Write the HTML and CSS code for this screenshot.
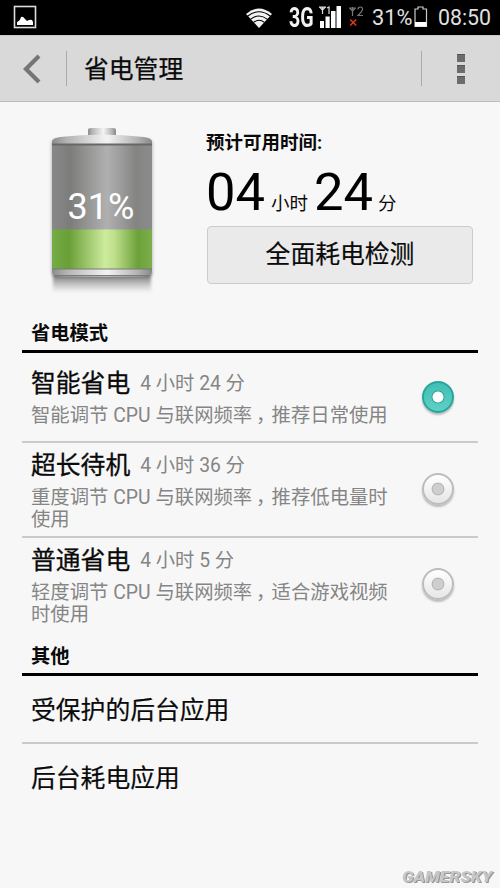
FILE: index.html
```html
<!DOCTYPE html>
<html lang="zh-CN">
<head>
<meta charset="utf-8">
<title>省电管理</title>
<link rel="stylesheet" href="styles.css">
</head>
<body>
<div class="status">
  <svg class="status-picture" width="24" height="24" viewBox="0 0 24 24"><rect x="1.500" y="1.500" width="21" height="21" fill="none" stroke="#ddd" stroke-width="1.600"/><path d="M4 20v-3q3-1 4-5 2-1 4 2l2 2q3-2 5-1l1 2v3z" fill="#fff"/></svg>
  <svg class="status-wifi" width="26" height="20" viewBox="0 0 26 20"><path d="M0 6Q13-5 26 6L13 20Z" fill="#f2f2f2"/><path d="M1.500 8.200Q13-.8 24.500 8.200M4.500 11.400Q13 4.600 21.500 11.400M7.600 14.400Q13 10.200 18.400 14.400" fill="none" stroke="#000" stroke-width="1.100"/></svg>
  <span class="net">3G</span>
  <svg class="status-signal" width="23" height="23" viewBox="0 0 23 23"><path d="M1 15h4v7H1zM6.500 10.500h4.200v11.500H6.500zM12 5h4.500v17H12zM17.500 0H22v22h-4.500z" fill="#fff"/><path d="M0 1.200h7M3.500 1v7M.7 1.200l2.800 3 2.800-3M8 2l2-1v7" fill="none" stroke="#ddd" stroke-width="1.200"/></svg>
  <svg class="status-sim" width="16" height="22" viewBox="0 0 16 22"><path d="M0 2h7M3.500 1v9M.7 2l2.800 3.200L6.300 2M9 3.500q0-2.500 2.300-2.500t2.200 2.500Q13.500 5 9 9.500h5" fill="none" stroke="#777" stroke-width="1.200"/><path d="M1.200 13.500l6 6M7.200 13.500l-6 6" stroke="#e8371c" stroke-width="1.500"/></svg>
  <span class="pct">31%</span>
  <svg class="status-battery" width="14" height="22" viewBox="0 0 14 22"><path d="M1 3h3V1h5v2h3.500v17.500H1z" fill="none" stroke="#ccc" stroke-width="1.200"/><path d="M1 16h11.500v4.500H1z" fill="#fff"/></svg>
  <span class="clock">08:50</span>
</div>
<header class="bar">
  <svg class="back" width="20" height="30" viewBox="0 0 20 30"><path d="M17 2L4 15l13 13" fill="none" stroke="#757575" stroke-width="4.200"/></svg>
  <h1>省电管理</h1>
  <div class="more"><i></i><i></i><i></i></div>
</header>
<main>
  <section class="summary">
    <div class="battery">
      <svg width="124" height="176" viewBox="0 0 124 176">
        <defs>
          <linearGradient id="metal"><stop offset="0" stop-color="#8c8c8c"/><stop offset=".15" stop-color="#b4b4b4"/><stop offset=".55" stop-color="#f4f4f4"/><stop offset=".85" stop-color="#b4b4b4"/><stop offset="1" stop-color="#888"/></linearGradient>
          <linearGradient id="body"><stop offset="0" stop-color="#888"/><stop offset=".18" stop-color="#7c7d7b"/><stop offset=".55" stop-color="#b0b0b0"/><stop offset=".84" stop-color="#848583"/><stop offset="1" stop-color="#8b8b8b"/></linearGradient>
          <linearGradient id="charge"><stop offset="0" stop-color="#76ac45"/><stop offset=".17" stop-color="#6a9f38"/><stop offset=".53" stop-color="#cdeb9d"/><stop offset=".62" stop-color="#c0e08d"/><stop offset=".86" stop-color="#6ca13a"/><stop offset="1" stop-color="#7caf4c"/></linearGradient>
          <linearGradient id="shadow" x2="0" y2="1"><stop offset="0" stop-color="#444" stop-opacity=".9"/><stop offset="1" stop-color="#888" stop-opacity="0"/></linearGradient>
          <filter id="soft" x="-20%" y="-20%" width="140%" height="140%"><feGaussianBlur stdDeviation="1.800"/></filter>
        </defs>
        <rect x="11" y="18" width="102" height="138" rx="5" fill="#777" opacity=".4" filter="url(#soft)"/>
        <rect x="13" y="151" width="98" height="21" fill="url(#shadow)" filter="url(#soft)"/>
        <path d="M48 16V9q0-2 3-2h22q3 0 3 2v7z" fill="url(#metal)"/>
        <path d="M12 20q1-3 8-4 42-5 84 0 7 1 8 4v131q-1 4-8 4.500H20q-7-.5-8-4.500z" fill="url(#metal)"/>
        <rect x="12" y="23" width="100" height="86.500" fill="url(#body)"/>
        <path d="M12 23.500h100" stroke="#676967" stroke-width="2"/>
        <rect x="12" y="108.500" width="100" height="39.500" fill="url(#charge)"/>
        <path d="M12 148h100M15 154.500h94" stroke="#797b76" stroke-width="1.200"/>
      </svg>
      <span class="battery-level">31%</span>
    </div>
    <div class="estimate">
      <div class="estimate-label">预计可用时间:</div>
      <div class="time"><b>04</b><span class="unit hours">小时</span><b>24</b><span class="unit minutes">分</span></div>
      <button>全面耗电检测</button>
    </div>
  </section>
  <h2>省电模式</h2>
  <div class="mode mode-first">
    <div class="text"><div class="title"><strong>智能省电</strong><span>4 小时 24 分</span></div><p>智能调节 CPU 与联网频率<span class="comma">，</span>推荐日常使用</p></div>
    <div class="radio on"></div>
  </div>
  <div class="mode mode-long">
    <div class="text"><div class="title"><strong>超长待机</strong><span>4 小时 36 分</span></div><p>重度调节 CPU 与联网频率<span class="comma">，</span>推荐低电量时使用</p></div>
    <div class="radio"></div>
  </div>
  <div class="mode mode-normal">
    <div class="text"><div class="title"><strong>普通省电</strong><span>4 小时 5 分</span></div><p>轻度调节 CPU 与联网频率<span class="comma">，</span>适合游戏视频时使用</p></div>
    <div class="radio"></div>
  </div>
  <h2>其他</h2>
  <div class="link">受保护的后台应用</div>
  <div class="link">后台耗电应用</div>
</main>
<div class="brand">GAMERSKY</div>
</body>
</html>
```
FILE: styles.css
```css
* { box-sizing: border-box; }
body {
  margin: 0;
  width: 500px;
  height: 888px;
  overflow: hidden;
  position: relative;
  background: #f7f7f7;
  color: #0a0a0a;
  font-family: Roboto, "Noto Sans CJK SC", sans-serif;
}
h1, h2, p { margin: 0; }
svg { display: block; flex: none; }

.status { height: 35px; background: #000; color: #e0e0e0; display: flex; align-items: center; white-space: nowrap; }
.status-picture { margin-left: 13px; margin-top: -1px; }
.status-wifi { margin-left: 209px; }
.net { width: 30px; margin-left: 17px; font-size: 28px; font-weight: 700; line-height: 36px; color: #f2f2f2; display: block; transform: scaleX(.7); transform-origin: 0 50%; }
.status-signal { margin-left: 0; }
.status-sim { margin-left: 7px; margin-top: -2px; }
.pct { margin-left: 7px; width: 41px; font-size: 21.8px; line-height: 39px; }
.status-battery { margin-left: 1px; margin-top: -2px; }
.clock { margin-left: 10px; font-size: 21.3px; line-height: 39px; }

.bar { height: 67px; background: #d9d9d9; border-top: 1px solid #cacaca; border-bottom: 1px solid #bdbdbd; display: flex; align-items: center; }
.back { margin-left: 22px; }
h1 { flex: 1; height: 35px; margin-left: 24px; padding-left: 17px; border-left: 1px solid #aaa; font-size: 24.8px; line-height: 37px; font-weight: 400; -webkit-text-stroke: .25px; }
.more { height: 35px; width: 79px; border-left: 1px solid #aaa; padding-left: 35px; display: flex; flex-direction: column; justify-content: center; gap: 3px; }
.more i { width: 8px; height: 8px; background: #6c6c6c; border-top: 1px solid #555; }

main { padding: 0 22px; }
.summary { height: 212px; display: flex; }
.battery { position: relative; flex: none; width: 124px; margin: 19px 0 0 18px; }
.battery-level { position: absolute; left: 0; top: 64px; width: 122px; text-align: center; font-size: 36px; line-height: 44px; color: #fff; }
.estimate { flex: none; margin: 28px 0 0 42px; width: 267px; }
.estimate-label { font-size: 18.5px; line-height: 27px; font-weight: 700; }
.time { height: 69px; display: flex; align-items: baseline; line-height: 71px; white-space: nowrap; }
.time b { font-weight: 400; font-size: 52.5px; color: #000; }
.unit { font-size: 18.5px; }
.hours { margin: 0 6px 0 6px; }
.minutes { margin-left: 5px; }
button { display: block; width: 266px; height: 58px; margin-left: 1px; padding: 1px 0 0; border: 1px solid #ccc; border-radius: 4px; background: #eaeaea; color: #0a0a0a; font: 400 24.8px/1 Roboto, "Noto Sans CJK SC", sans-serif; -webkit-text-stroke: .2px; }

h2 { height: 39px; padding: 6px 9px 0; border-bottom: 3px solid #000; font-size: 19.3px; line-height: 28px; font-weight: 700; }
.mode { display: flex; border-bottom: 2px solid #cacaca; padding-left: 9px; }
.mode-first { height: 90px; padding-top: 13px; }
.mode-long { height: 95px; padding-top: 5px; }
.mode-normal { height: 99px; padding-top: 5px; border: 0; }
.text { flex: none; width: 366px; }
.title { display: flex; align-items: center; height: 39px; padding-bottom: 3px; line-height: 36px; white-space: nowrap; }
.title strong { font-size: 24.8px; font-weight: 400; -webkit-text-stroke: .3px; }
.title span { font-size: 19.3px; margin-left: 10px; color: #858585; }
p { font-size: 19.37px; line-height: 22px; color: #858585; }
.comma { display: inline-block; width: 1em; text-indent: .2em; }
.radio { flex: none; width: 32px; height: 32px; margin: 25px 0 0 25px; border: 2px solid #bcbcbc; border-radius: 50%; background: radial-gradient(circle, #cecece 0 5px, #b9b9b9 5.5px 6px, transparent 6.8px), linear-gradient(#fff, #e6e6e6); box-shadow: 0 2px 2px #bbb; }
.radio.on { margin-top: 15px; border-color: #28a59a; background: radial-gradient(circle, #fff 0 5px, #229b91 6px, transparent 6.8px), linear-gradient(#40bfb4, #5ed0c6); }
.link { height: 68px; padding-left: 9px; border-bottom: 2px solid #cacaca; font-size: 24.8px; line-height: 70px; -webkit-text-stroke: .2px; }
.link:last-child { border: 0; }
.brand { position: absolute; left: 402px; top: 868px; font: italic 900 15px/18px Roboto, sans-serif; color: #c6c6c6; text-shadow: 1px 1px 0 #999; white-space: nowrap; transform: scaleX(1.16); transform-origin: 0 50%; }
```
